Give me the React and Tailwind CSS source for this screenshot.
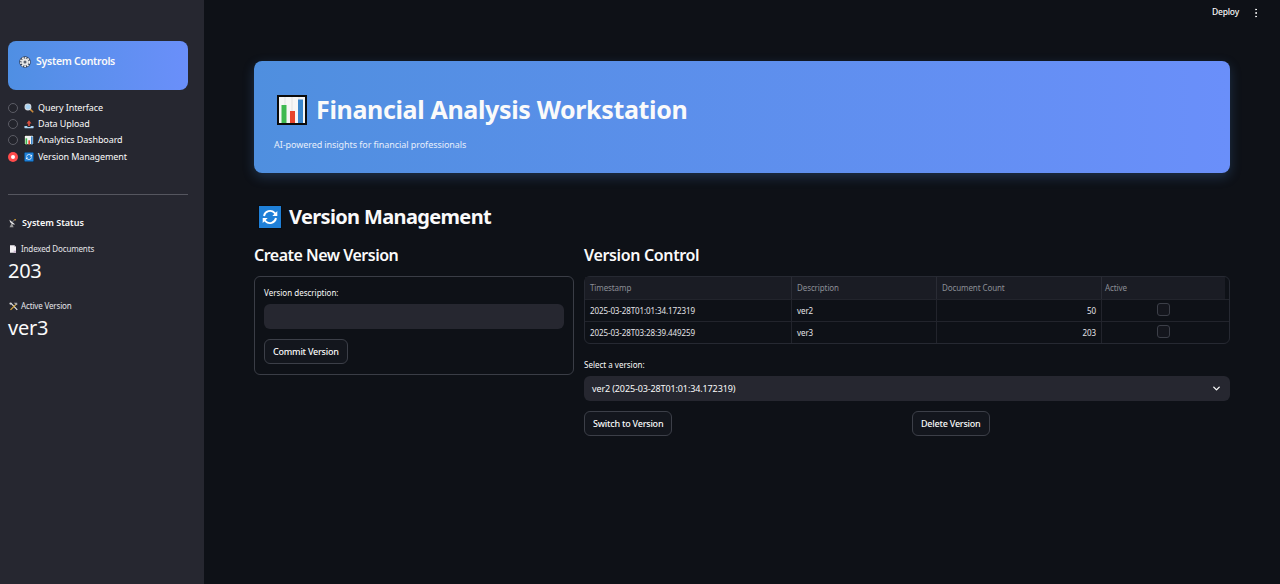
import { ChevronDown, EllipsisVertical } from 'lucide-react'

// emoji drawings
function ChartEmoji({ className }) {
  return (
    <svg viewBox="0 0 30 30" className={className}>
      <rect x="1" y="1" width="28" height="28" fill="#f6f6f6" stroke="#0b0b0b" strokeWidth="2" />
      <path d="M8 2v26M15 2v26M22 2v26" stroke="#e2e2e2" strokeWidth="1" />
      <rect x="4.5" y="10" width="5" height="18" fill="#3fb950" />
      <rect x="13" y="16" width="5" height="12" fill="#e8452c" />
      <rect x="21" y="4.5" width="5" height="23.5" fill="#3a86cc" />
    </svg>
  )
}

function SyncEmoji({ className }) {
  return (
    <svg viewBox="0 0 24 24" className={className}>
      <rect width="24" height="24" fill="#0a0d12" />
      <rect x="1" y="1" width="22" height="22" fill="#1f80d8" />
      <path d="M6 11a6.2 6.2 0 0 1 10.6-3.1l1.2 1.3M18 13a6.2 6.2 0 0 1-10.6 3.1l-1.2-1.3" fill="none" stroke="#fff" strokeWidth="1.9" />
      <path d="M19.3 6v5h-5zM4.7 18v-5h5z" fill="#fff" />
    </svg>
  )
}

function GearEmoji({ className }) {
  return (
    <svg viewBox="0 0 24 24" className={className}>
      <circle cx="12" cy="12" r="11.5" fill="#2f3a4f" />
      <circle cx="12" cy="12" r="8.5" fill="none" stroke="#f0f0f0" strokeWidth="3.5" strokeDasharray="3.5 2" />
      <circle cx="12" cy="12" r="7" fill="#e6e6e6" />
      <circle cx="12" cy="12" r="3" fill="#5b6270" />
    </svg>
  )
}

function SearchEmoji({ className }) {
  return (
    <svg viewBox="0 0 24 24" className={className}>
      <path d="M14 14l7 7" stroke="#c98a3c" strokeWidth="4" strokeLinecap="round" />
      <circle cx="9.5" cy="9.5" r="7" fill="#a8d4f5" stroke="#d6dde4" strokeWidth="2.5" />
    </svg>
  )
}

function UploadEmoji({ className }) {
  return (
    <svg viewBox="0 0 24 24" className={className}>
      <path d="M12 3l6 8h-4v6h-4v-6H6z" fill="#d9503f" />
      <path d="M1 17h7v2h8v-2h7v4a1 1 0 0 1-1 1H2a1 1 0 0 1-1-1z" fill="#a9d3f2" />
    </svg>
  )
}

function DishEmoji({ className }) {
  return (
    <svg viewBox="0 0 24 24" className={className}>
      <path d="M4 3c1 8 5 13 15 13z" fill="#ececec" />
      <path d="M9 13l-5 10h11l-3-8z" fill="#9b9b9b" />
      <path d="M12 9l6-6" stroke="#d8d8d8" strokeWidth="1.5" />
      <circle cx="19" cy="3" r="2" fill="#f0b429" />
    </svg>
  )
}

function DocEmoji({ className }) {
  return (
    <svg viewBox="0 0 24 24" className={className}>
      <path d="M3 1h13l5 5v17H3z" fill="#f3f0f3" />
      <path d="M16 1l5 5h-5z" fill="#c7bcc7" />
      <path d="M14 17h7v6h-7z" fill="#cbb5cf" />
    </svg>
  )
}

function ToolsEmoji({ className }) {
  return (
    <svg viewBox="0 0 24 24" className={className}>
      <path d="M5 3l17 18" stroke="#e8e8e8" strokeWidth="3" />
      <path d="M20 5L4 21" stroke="#d9a93c" strokeWidth="3.5" />
      <path d="M13 2h9v6h-4z" fill="#a5a5a5" />
      <circle cx="4" cy="4" r="3" fill="#d0d0d0" />
    </svg>
  )
}

const navItems = [
  { label: 'Query Interface', Icon: SearchEmoji },
  { label: 'Data Upload', Icon: UploadEmoji },
  { label: 'Analytics Dashboard', Icon: ChartEmoji },
  { label: 'Version Management', Icon: SyncEmoji, active: true },
]

function Sidebar() {
  return (
    <aside className="w-[204px] shrink-0 bg-[#262730] pl-2 pr-4 pt-[41px] text-[#fafafa]">
      <div className="h-[49px] rounded-lg bg-gradient-to-r from-[#4f8fe3] to-[#6a8ffa] flex items-center pl-[11px] pb-2 gap-[5px]">
        <GearEmoji className="w-[12px] h-[12px]" />
        <span className="text-[10.5px] font-semibold tracking-[-0.27px]">System Controls</span>
      </div>

      <div className="mt-[9.5px] flex flex-col">
        {navItems.map(({ label, Icon, active }) => (
          <div key={label} className="h-[16.3px] flex items-center text-[9px] tracking-[-0.1px]">
            {active ? (
              <span className="w-[10px] h-[10px] rounded-full bg-[#ff4b4b] flex items-center justify-center">
                <span className="w-[4px] h-[4px] rounded-full bg-white" />
              </span>
            ) : (
              <span className="w-[10px] h-[10px] rounded-full border-[1.5px] border-[#5c5d66] bg-[#23242c]" />
            )}
            <Icon className="w-[10px] h-[10px] ml-[6px] mr-[4px]" />
            <span>{label}</span>
          </div>
        ))}
      </div>

      <div className="mt-[29.5px] h-px bg-[#55565f]" />

      <div className="mt-[22px] flex items-center h-[12px] text-[9px] font-semibold">
        <DishEmoji className="w-[9px] h-[10px] mr-[5px]" />
        System Status
      </div>
      <div className="mt-[14px] flex items-center h-[12px] text-[8px] tracking-[-0.15px] text-[#e4e4e8]">
        <DocEmoji className="w-[8px] h-[10px] mr-[4px] ml-px" />
        Indexed Documents
      </div>
      <div className="text-[20px] tracking-[-0.3px] leading-[26px] mt-[3px]">203</div>
      <div className="mt-[16px] flex items-center h-[12px] text-[8px] tracking-[-0.15px] text-[#e4e4e8]">
        <ToolsEmoji className="w-[9px] h-[9px] mr-[3px] ml-px" />
        Active Version
      </div>
      <div className="text-[20px] tracking-[-0.2px] leading-[26px] mt-[3px]">ver3</div>
    </aside>
  )
}

function Button({ children }) {
  return (
    <button className="block h-[25px] px-2 rounded-md border border-[#3c3f48] bg-[#13161d] text-[9px] tracking-[-0.22px] font-medium text-[#fafafa]">
      {children}
    </button>
  )
}

const rows = [
  { ts: '2025-03-28T01:01:34.172319', desc: 'ver2', count: 50 },
  { ts: '2025-03-28T03:28:39.449259', desc: 'ver3', count: 203 },
]

function VersionTable() {
  return (
    <div className="rounded-md border border-[#262932] text-[8px] tracking-[-0.1px]">
      <div className="flex h-[22px] items-center text-[#8b8e96]">
        <div className="w-[207px] h-full flex items-center px-[5px] bg-[#1a1c24] border-r border-[#2a2c35]">Timestamp</div>
        <div className="w-[145px] h-full flex items-center px-[5px] bg-[#1a1c24] border-r border-[#2a2c35]">Description</div>
        <div className="w-[165px] h-full flex items-center px-[5px] bg-[#1a1c24] border-r border-[#2a2c35]">Document Count</div>
        <div className="w-[123px] h-full flex items-center px-[3px] bg-[#1a1c24]">Active</div>
      </div>
      {rows.map(r => (
        <div key={r.ts} className="flex h-[22px] items-center text-[#e4e4e8] border-t border-[#22242c]">
          <div className="w-[207px] h-full flex items-center px-[5px] border-r border-[#22242c]">{r.ts}</div>
          <div className="w-[145px] h-full flex items-center px-[5px] border-r border-[#22242c]">{r.desc}</div>
          <div className="w-[165px] h-full flex items-center justify-end px-[5px] border-r border-[#22242c]">{r.count}</div>
          <div className="w-[123px] h-full flex items-center justify-center pb-[2px]">
            <span className="w-[13px] h-[13px] rounded-[3px] border border-[#3c3f48] bg-[#14161d]" />
          </div>
        </div>
      ))}
    </div>
  )
}

export default function App() {
  return (
    <div className="h-[584px] w-[1280px] flex overflow-hidden bg-[#0e1117] text-[#fafafa] font-['Noto_Sans','Liberation_Sans',sans-serif]">
      <Sidebar />
      <main className="flex-1 min-w-0">
        <div className="h-[25px] flex items-center justify-end pr-[18px] text-[8.5px] tracking-[-0.2px] font-medium">
          <span>Deploy</span>
          <EllipsisVertical className="w-[12px] h-[12px] ml-[11px]" />
        </div>

        <div className="ml-[50px] mr-[50px] mt-[36px]">
          <div className="h-[112px] rounded-lg bg-gradient-to-r from-[#4f8fdf] to-[#6a8ffa] pl-5 pt-[34px] shadow-[0_4px_12px_rgba(79,143,223,0.25)]">
            <div className="flex items-center h-[30px]">
              <ChartEmoji className="w-[30px] h-[30px] ml-[3px] mr-[9px]" />
              <h1 className="text-[25px] font-bold tracking-[-0.35px] whitespace-nowrap">Financial Analysis Workstation</h1>
            </div>
            <p className="mt-[13px] text-[9px] tracking-[-0.07px] text-[#e6eefb]">AI-powered insights for financial professionals</p>
          </div>

          <div className="mt-[32px] flex items-center h-[24px] ml-[4px]">
            <SyncEmoji className="w-[24px] h-[24px] mr-[7px]" />
            <h2 className="text-[20px] font-bold tracking-[-0.65px] whitespace-nowrap">Version Management</h2>
          </div>

          <div className="mt-[15px] flex gap-[10px]">
            <section className="w-[320px] shrink-0">
              <h3 className="text-[16px] font-semibold tracking-[-0.5px] h-[22px] leading-[22px] mb-[10px]">Create New Version</h3>
              <div className="h-[99px] rounded-md border border-[#3a3d46] px-[9px] pt-[10px]">
                <label className="block text-[8px] h-[12px] leading-[12px]">Version description:</label>
                <div className="mt-[5px] h-[25px] rounded-md bg-[#262730]" />
                <div className="mt-[10px]">
                  <Button>Commit Version</Button>
                </div>
              </div>
            </section>

            <section className="flex-1 min-w-0">
              <h3 className="text-[16px] font-semibold tracking-[-0.35px] h-[22px] leading-[22px] mb-[10px]">Version Control</h3>
              <VersionTable />
              <label className="block mt-[15px] text-[8px] h-[12px] leading-[12px]">Select a version:</label>
              <div className="mt-[5px] h-[25px] rounded-md bg-[#262730] flex items-center justify-between pl-2 pr-[8px] text-[9px] tracking-[-0.12px]">
                <span>ver2 (2025-03-28T01:01:34.172319)</span>
                <ChevronDown className="w-[11px] h-[11px]" strokeWidth={3} />
              </div>
              <div className="mt-[10px] grid grid-cols-2 gap-[10px] justify-items-start">
                <Button>Switch to Version</Button>
                <Button>Delete Version</Button>
              </div>
            </section>
          </div>
        </div>
      </main>
    </div>
  )
}
